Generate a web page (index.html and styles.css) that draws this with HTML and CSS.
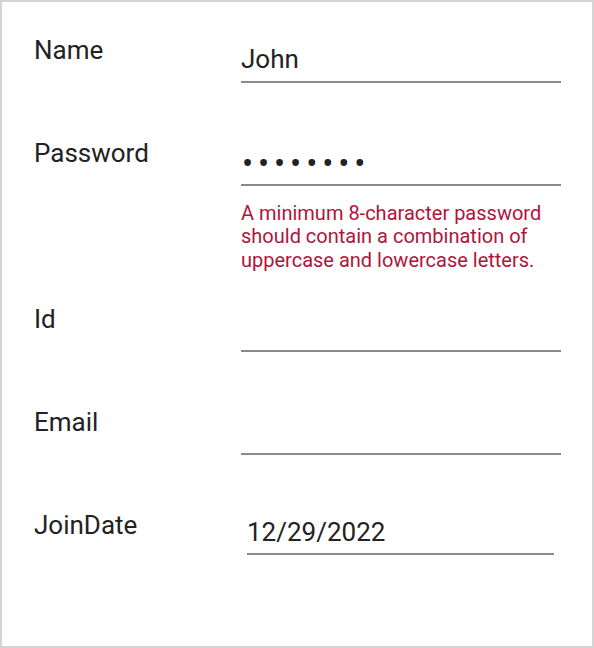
FILE: index.html
```html
<!DOCTYPE html>
<html lang="en">
<head>
<meta charset="utf-8">
<title>Form</title>
<link rel="stylesheet" href="styles.css">
</head>
<body>
<div class="frame">
  <form class="form">
    <div class="row">
      <div class="label">Name</div>
      <div class="field"><span class="value">John</span></div>
    </div>
    <div class="row row-helper">
      <div class="label">Password</div>
      <div class="field-col">
        <div class="field"><span class="value dots">••••••••</span></div>
        <div class="helper">A minimum 8-character password should contain a combination of uppercase and lowercase letters.</div>
      </div>
    </div>
    <div class="row row-after-helper">
      <div class="label">Id</div>
      <div class="field"><span class="value"></span></div>
    </div>
    <div class="row">
      <div class="label">Email</div>
      <div class="field"><span class="value"></span></div>
    </div>
    <div class="row">
      <div class="label">JoinDate</div>
      <div class="field field-date"><span class="value">12/29/2022</span></div>
    </div>
  </form>
</div>
</body>
</html>
```

FILE: styles.css
```css
html, body {
  margin: 0;
  padding: 0;
  background: #ffffff;
}

.frame {
  box-sizing: border-box;
  width: 594px;
  height: 648px;
  border: 2px solid #d4d4d4;
  background: #ffffff;
  font-family: Roboto, "Liberation Sans", sans-serif;
  color: #222222;
}

.form {
  display: flex;
  flex-direction: column;
  padding: 33px 0 0 32px;
}

.row {
  display: grid;
  grid-template-columns: 207px 320px;
  align-items: start;
}

.row + .row {
  margin-top: 55px;
}

.row.row-after-helper {
  margin-top: 32px;
}

.label {
  font-size: 26px;
  line-height: 30px;
  height: 30px;
}

.field {
  margin-top: 9px;
  height: 30px;
  padding-bottom: 7px;
  border-bottom: 2px solid #8a8a8a;
  font-size: 26px;
  line-height: 30px;
}

.field-date {
  margin-top: 7px;
  margin-left: 6px;
  width: 307px;
  padding-bottom: 6px;
}

.value {
  display: block;
  height: 30px;
  white-space: nowrap;
}

.dots {
  font-size: 33px;
  line-height: 34px;
  letter-spacing: 4.9px;
  padding-left: 1px;
}

.field-col {
  display: flex;
  flex-direction: column;
}

.helper {
  margin-top: 16px;
  font-size: 20px;
  line-height: 23.4px;
  color: #b0143c;
}
```
